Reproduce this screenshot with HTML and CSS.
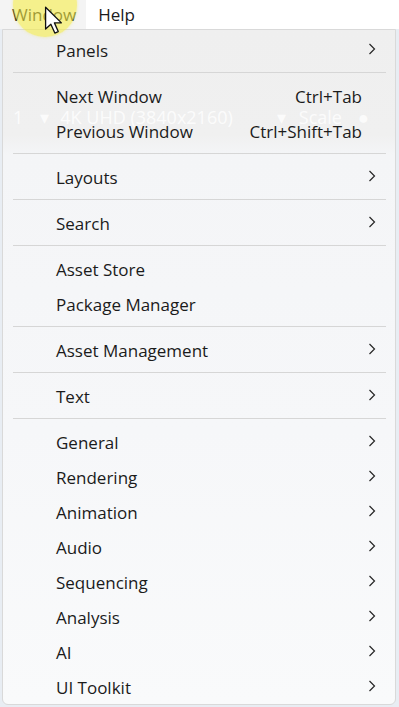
FILE: index.html
```html
<!DOCTYPE html>
<html lang="en">
<head>
  <meta charset="UTF-8" />
  <meta name="viewport" content="width=device-width, initial-scale=1.0" />
  <title>Window menu</title>
  <link rel="stylesheet" href="styles.css">
</head>
<body>

  <div class="menubar">
    <span class="menubar-item active">Window</span>
    <span class="menubar-item">Help</span>
  </div>

  <div class="menu">
    <!-- toolbar of the window behind, seen through the menu -->
    <div class="ghost">
      <span>1</span><span>▾</span><span>4K UHD (3840x2160)</span><span>▾</span><span>Scale</span><span>●</span>
    </div>

    <div class="item"><span class="label">Panels</span><svg class="arrow" viewBox="0 0 8 12"><path d="M1.5 1 L6.5 6 L1.5 11"/></svg></div>
    <div class="sep"></div>
    <div class="item"><span class="label">Next Window</span><span class="shortcut">Ctrl+Tab</span></div>
    <div class="item"><span class="label">Previous Window</span><span class="shortcut">Ctrl+Shift+Tab</span></div>
    <div class="sep"></div>
    <div class="item"><span class="label">Layouts</span><svg class="arrow" viewBox="0 0 8 12"><path d="M1.5 1 L6.5 6 L1.5 11"/></svg></div>
    <div class="sep"></div>
    <div class="item"><span class="label">Search</span><svg class="arrow" viewBox="0 0 8 12"><path d="M1.5 1 L6.5 6 L1.5 11"/></svg></div>
    <div class="sep"></div>
    <div class="item"><span class="label">Asset Store</span></div>
    <div class="item"><span class="label">Package Manager</span></div>
    <div class="sep"></div>
    <div class="item"><span class="label">Asset Management</span><svg class="arrow" viewBox="0 0 8 12"><path d="M1.5 1 L6.5 6 L1.5 11"/></svg></div>
    <div class="sep"></div>
    <div class="item"><span class="label">Text</span><svg class="arrow" viewBox="0 0 8 12"><path d="M1.5 1 L6.5 6 L1.5 11"/></svg></div>
    <div class="sep"></div>
    <div class="item"><span class="label">General</span><svg class="arrow" viewBox="0 0 8 12"><path d="M1.5 1 L6.5 6 L1.5 11"/></svg></div>
    <div class="item"><span class="label">Rendering</span><svg class="arrow" viewBox="0 0 8 12"><path d="M1.5 1 L6.5 6 L1.5 11"/></svg></div>
    <div class="item"><span class="label">Animation</span><svg class="arrow" viewBox="0 0 8 12"><path d="M1.5 1 L6.5 6 L1.5 11"/></svg></div>
    <div class="item"><span class="label">Audio</span><svg class="arrow" viewBox="0 0 8 12"><path d="M1.5 1 L6.5 6 L1.5 11"/></svg></div>
    <div class="item"><span class="label">Sequencing</span><svg class="arrow" viewBox="0 0 8 12"><path d="M1.5 1 L6.5 6 L1.5 11"/></svg></div>
    <div class="item"><span class="label">Analysis</span><svg class="arrow" viewBox="0 0 8 12"><path d="M1.5 1 L6.5 6 L1.5 11"/></svg></div>
    <div class="item"><span class="label">AI</span><svg class="arrow" viewBox="0 0 8 12"><path d="M1.5 1 L6.5 6 L1.5 11"/></svg></div>
    <div class="item"><span class="label">UI Toolkit</span><svg class="arrow" viewBox="0 0 8 12"><path d="M1.5 1 L6.5 6 L1.5 11"/></svg></div>
  </div>

  <div class="spot"></div>
  <svg class="pointer" viewBox="0 0 14 22">
    <path d="M1 1 L1 17.5 L5 13.8 L8 20.5 L10.6 19.4 L7.7 12.8 L13 12.8 Z"/>
  </svg>

</body>
</html>
```

FILE: styles.css
```css
body {
  margin: 0;
  font-family: 'Open Sans', 'Noto Sans', sans-serif;
  font-size: 17px;
  color: #1b1b1b;
  background: #e8edf3;
  height: 707px;
  overflow: hidden;
}
.menubar {
  display: flex;
  height: 29px;
  background: #fff;
}
.menubar-item {
  display: flex;
  align-items: center;
  padding: 0 12px;
}
.menubar-item.active {
  background: #f4f4f4;
  padding-right: 10px;
}
.menu {
  position: relative;
  margin: 0 3px 0 2px;
  padding-top: 2px;
  border: 1px solid #d9d9d9;
  border-radius: 0 0 6px 6px;
  background: linear-gradient(#efefef 0, #f0f0f0 105px, #f4f5f7 125px, #f6f7f9 400px, #f9fafb 100%);
}
.item {
  position: relative;
  display: flex;
  align-items: center;
  height: 35px;
  padding: 2px 19px 0 53px;
  box-sizing: border-box;
}
.label {
  flex: 1;
}
.shortcut {
  margin-right: 14px;
}
.arrow {
  width: 8px;
  height: 12px;
  margin-top: -3px;
}
.arrow path {
  fill: none;
  stroke: #262626;
  stroke-width: 1.2;
}
.sep {
  height: 11px;
  padding-top: 5px;
  box-sizing: border-box;
}
.sep::after {
  content: "";
  display: block;
  margin: 0 9px 0 10px;
  border-top: 1px solid #d6d6d6;
}
.ghost {
  position: absolute;
  top: 69px;
  left: 10px;
  right: 0;
  height: 35px;
  display: flex;
  align-items: center;
  color: rgba(255, 255, 255, 0.8);
  font-size: 18px;
  pointer-events: none;
}
.ghost span:nth-child(2) { margin-left: 17px; }
.ghost span:nth-child(3) { margin-left: 11px; }
.ghost span:nth-child(4) { margin-left: 44px; }
.ghost span:nth-child(5) { margin-left: 13px; }
.ghost span:nth-child(6) { margin-left: 16px; }
.spot {
  position: absolute;
  left: 13px;
  top: -27px;
  width: 64px;
  height: 64px;
  border-radius: 50%;
  background: rgba(245, 236, 70, 0.6);
  box-shadow: 0 0 3px rgba(245, 236, 70, 0.5);
}
.pointer {
  position: absolute;
  left: 44px;
  top: 6px;
  width: 19px;
  height: 29px;
}
.pointer path {
  fill: #fff;
  stroke: #111;
  stroke-width: 1;
  stroke-linejoin: round;
}
```
